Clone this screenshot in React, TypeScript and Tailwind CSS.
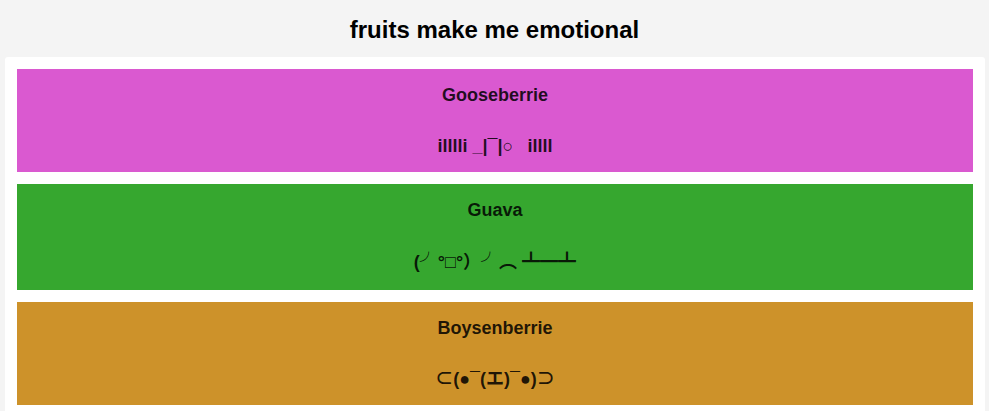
const fruits = [
  {
    name: 'Gooseberrie',
    face: (
      <>
        illlli _|¯|○ <span className="ml-[9px]">illll</span>
      </>
    ),
    bg: 'bg-[#da59d0]',
    lh: 'leading-[20px]',
  },
  { name: 'Guava', face: '(╯°□°）╯︵ ┻━┻', bg: 'bg-[#36a72f]', lh: 'leading-[23px]' },
  { name: 'Boysenberrie', face: '⊂(●¯(エ)¯●)⊃', bg: 'bg-[#cd922a]', lh: 'leading-[20px]' },
]

export default function App() {
  return (
    <div className="min-h-screen bg-[#f4f4f4] font-['Liberation_Sans',Arial,sans-serif] text-black">
      <h1 className="pt-4 pb-[13px] text-center text-[24px] font-bold leading-[28px]">fruits make me emotional</h1>
      <div className="ml-[5px] mr-[4px] flex flex-col gap-3 rounded-[3px] bg-white p-3">
        {fruits.map((f) => (
          <div key={f.name} className={`${f.bg} py-4 text-center text-black/85`}>
            <h3 className="text-[18px] font-bold leading-[20px]">{f.name}</h3>
            <p className={`mt-[31px] text-[18px] font-bold ${f.lh} font-['Liberation_Sans','Noto_Sans_CJK_JP',sans-serif]`}>
              {f.face}
            </p>
          </div>
        ))}
      </div>
    </div>
  )
}
